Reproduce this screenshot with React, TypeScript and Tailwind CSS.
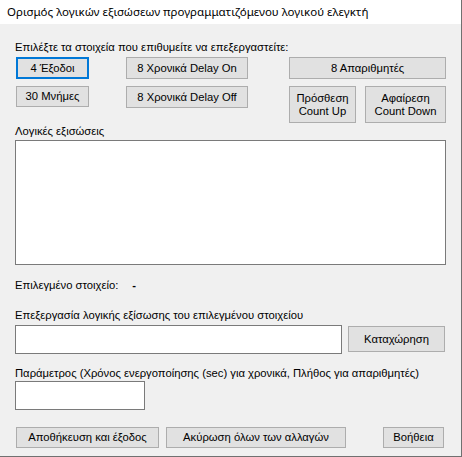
export default function App() {
  const base =
    "flex items-center justify-center bg-[#e1e1e1] text-black leading-[13px] text-center";
  const btn = `${base} border border-[#adadad]`;
  const focused = `${base} border-2 border-[#0078d7]`;
  return (
    <div className="w-[462px] h-[457px] bg-[#f0f0f0] border-r border-b border-[#707070] font-['Liberation_Sans',Arial,sans-serif] text-[11.25px] text-black flex flex-col overflow-hidden">
      <div className="h-[24px] shrink-0 bg-white flex items-center pl-[7px] text-[11.5px] font-['Noto_Sans',sans-serif]">
        Ορισμός λογικών εξισώσεων προγραμματιζόμενου λογικού ελεγκτή
      </div>

      <div className="flex flex-col">
        <div className="mt-[17px] h-[13px] leading-[13px] pl-[15px]">
          Επιλέξτε τα στοιχεία που επιθυμείτε να επεξεργαστείτε:
        </div>

        <div className="mt-[3px] flex items-start">
          <div className={`${focused} ml-[16px] w-[73px] h-[22px]`}>4 Έξοδοι</div>
          <div className={`${btn} ml-[37px] w-[122px] h-[22px]`}>8 Χρονικά Delay On</div>
          <div className={`${btn} ml-[41px] w-[157px] h-[22px]`}>8 Απαριθμητές</div>
        </div>

        <div className="mt-[7px] flex items-start">
          <div className={`${btn} ml-[16px] w-[73px] h-[21px]`}>30 Μνήμες</div>
          <div className={`${btn} ml-[37px] w-[122px] h-[22px]`}>8 Χρονικά Delay Off</div>
          <div className={`${btn} ml-[41px] w-[67px] h-[37px]`}>
            Πρόσθεση
            <br />
            Count Up
          </div>
          <div className={`${btn} ml-[9px] w-[81px] h-[37px]`}>
            Αφαίρεση
            <br />
            Count Down
          </div>
        </div>

        <div className="mt-[2px] h-[13px] leading-[13px] pl-[15px]">Λογικές εξισώσεις</div>
        <div className="mt-[2px] ml-[15px] w-[431px] h-[125px] bg-white border border-[#7a7a7a]" />

        <div className="mt-[14px] h-[13px] leading-[13px] pl-[15px] flex">
          <span>Επιλεγμένο στοιχείο:</span>
          <span className="ml-[14px] font-bold">-</span>
        </div>

        <div className="mt-[17px] h-[13px] leading-[13px] pl-[15px]">
          Επεξεργασία λογικής εξίσωσης του επιλεγμένου στοιχείου
        </div>
        <div className="mt-[3px] flex items-start">
          <div className="ml-[15px] w-[327px] h-[29px] bg-white border border-[#7a7a7a]" />
          <div className={`${btn} mt-[1px] ml-[6px] w-[97px] h-[26px]`}>Καταχώρηση</div>
        </div>

        <div className="mt-[13px] h-[13px] leading-[13px] pl-[15px]">
          Παράμετρος (Χρόνος ενεργοποίησης (sec) για χρονικά, Πλήθος για απαριθμητές)
        </div>
        <div className="mt-[1px] ml-[15px] w-[130px] h-[29px] bg-white border border-[#7a7a7a]" />

        <div className="mt-[17px] flex items-start">
          <div className={`${btn} ml-[16px] w-[143px] h-[21px]`}>Αποθήκευση και έξοδος</div>
          <div className={`${btn} ml-[7px] w-[180px] h-[21px]`}>Ακύρωση όλων των αλλαγών</div>
          <div className={`${btn} ml-[37px] w-[61px] h-[21px]`}>Βοήθεια</div>
        </div>
      </div>
    </div>
  );
}
